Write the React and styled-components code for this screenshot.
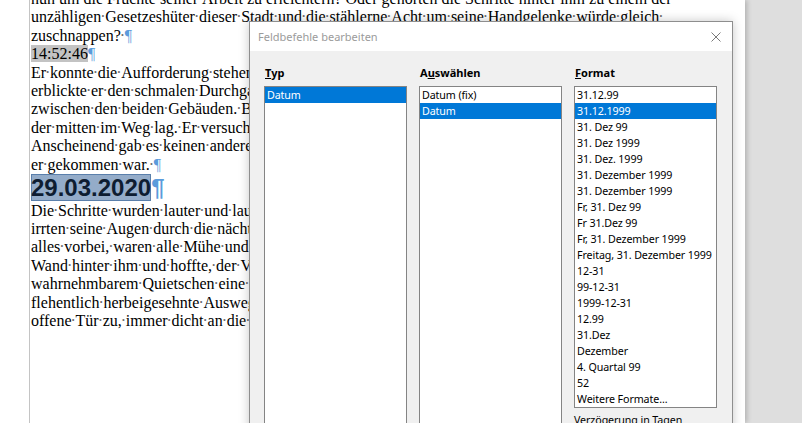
import React from "react";
import styled, { createGlobalStyle } from "styled-components";

const Global = createGlobalStyle`
  html, body { margin: 0; padding: 0; overflow: hidden; background: #dedede; }
  #root { width: 802px; height: 423px; }
`;

const Workspace = styled.div`
  position: relative;
  width: 802px;
  height: 423px;
  overflow: hidden;
  background: #dedede;
  display: flex;
`;

const Page = styled.div`
  flex-shrink: 0;
  width: 745px;
  height: 100%;
  box-sizing: border-box;
  padding-left: 29px;
  background: #ffffff;
  box-shadow: 2px 0 5px rgba(0, 0, 0, 0.2);
`;

const TextArea = styled.div`
  width: 644px;
  height: calc(100% + 10px);
  margin-top: -10px;
  box-sizing: border-box;
  border-left: 1px solid #c4c4c4;
  padding-left: 1px;
  overflow: hidden;
  font-family: "Liberation Serif", "Times New Roman", serif;
  font-size: 16px;
  line-height: 18.4px;
  color: #000;
`;

const Line = styled.div`
  white-space: pre;
`;

const Dot = styled.span`
  display: inline-block;
  width: 4px;
  text-align: center;
  color: #6a6a6a;
  overflow: visible;
  white-space: nowrap;
  text-indent: -1px;
`;

const Pilcrow = styled.span`
  color: #5b9bdb;
`;

const Field = styled.span`
  background: #c3c3c3;
`;

const BigLine = styled.div`
  white-space: nowrap;
  font-family: "Liberation Sans", Arial, sans-serif;
  font-weight: bold;
  font-size: 24px;
  line-height: 27.6px;
`;

const Selection = styled.span`
  background: #94acc9;
  color: #0e1d31;
  box-shadow: inset 0 0 0 1px #5a7fab;
`;

const Dialog = styled.div`
  position: absolute;
  left: 249px;
  top: 21px;
  width: 484px;
  height: 420px;
  box-sizing: border-box;
  border: 1px solid #8e8e8e;
  background: #f0f0f0;
  box-shadow: 0 0 10px rgba(0, 0, 0, 0.22);
  display: flex;
  flex-direction: column;
  font-family: "Noto Sans", "Open Sans", sans-serif;
  font-size: 10.7px;
  letter-spacing: -0.1px;
  color: #000;
`;

const TitleBar = styled.div`
  height: 29px;
  flex-shrink: 0;
  background: #ffffff;
  display: flex;
  align-items: center;
  justify-content: space-between;
  padding: 0 11px 0 8px;
`;

const Title = styled.span`
  color: #9b9b9b;
  font-size: 11px;
  letter-spacing: 0;
`;

const CloseIcon = styled.svg`
  width: 10px;
  height: 10px;
  display: block;
`;

const Body = styled.div`
  display: grid;
  grid-template-columns: repeat(3, 143px);
  column-gap: 12px;
  align-items: start;
  padding: 14px 15px 0 14px;
`;

const Column = styled.div`
  display: flex;
  flex-direction: column;
`;

const Label = styled.div`
  font-weight: bold;
  font-size: 11px;
  letter-spacing: 0;
  line-height: 16px;
  height: 16px;
  margin-bottom: 5px;
  padding-left: 1px;
  white-space: nowrap;
`;

const ListBox = styled.div`
  box-sizing: border-box;
  height: ${(p) => p.$height}px;
  border: 1px solid #848484;
  background: #ffffff;
  overflow: hidden;
`;

const Item = styled.div`
  height: 16px;
  line-height: 16px;
  padding-left: 2px;
  white-space: nowrap;
  background: ${(p) => (p.$selected ? "#0078d7" : "transparent")};
  color: ${(p) => (p.$selected ? "#ffffff" : "#000000")};
`;

const SubLabel = styled.div`
  margin-top: 4px;
  line-height: 16px;
  white-space: nowrap;
`;

function Text({ children }) {
  const words = children.split(" ");
  return (
    <>
      {words.map((w, i) => (
        <React.Fragment key={i}>
          {w}
          {i < words.length - 1 && <Dot>·</Dot>}
        </React.Fragment>
      ))}
    </>
  );
}

const lines = [
  "nun um die Früchte seiner Arbeit zu erleichtern? Oder gehörten die Schritte hinter ihm zu einem der",
  "unzähligen Gesetzeshüter dieser Stadt und die stählerne Acht um seine Handgelenke würde gleich ",
];

const middle = [
  "Er konnte die Aufforderung stehen zu bleiben nicht befolgen. Verzweifelt sah er sich um und",
  "erblickte er den schmalen Durchgang, eine dunkle Gasse, die sich wie ein Spalt auftat",
  "zwischen den beiden Gebäuden. Beinahe wäre er über den Mülleimer gestolpert,",
  "der mitten im Weg lag. Er versuchte sich im Dunkeln zu orientieren.",
  "Anscheinend gab es keinen anderen Ausweg als den Weg zurück, den",
];

const after = [
  "Die Schritte wurden lauter und lauter, er sah eine Gestalt um die Ecke biegen. Fieberhaft",
  "irrten seine Augen durch die nächtliche Dunkelheit und suchten einen Ausweg. War jetzt",
  "alles vorbei, waren alle Mühe und alle Vorbereitungen umsonst? Er presste sich gegen die",
  "Wand hinter ihm und hoffte, der Verfolger würde ihn übersehen. Plötzlich gab die Wand mit",
  "wahrnehmbarem Quietschen eine Tür frei. Er zögerte keinen Moment und stürzte durch den",
  "flehentlich herbeigesehnte Ausweg hinein. Leise zog er die",
  "offene Tür zu, immer dicht an die Wand gepresst, damit er nicht gesehen wurde.",
];

const formats = [
  "31.12.99",
  "31.12.1999",
  "31. Dez 99",
  "31. Dez 1999",
  "31. Dez. 1999",
  "31. Dezember 1999",
  "31. Dezember 1999",
  "Fr, 31. Dez 99",
  "Fr 31.Dez 99",
  "Fr, 31. Dezember 1999",
  "Freitag, 31. Dezember 1999",
  "12-31",
  "99-12-31",
  "1999-12-31",
  "12.99",
  "31.Dez",
  "Dezember",
  "4. Quartal 99",
  "52",
  "Weitere Formate...",
];

export default function App() {
  return (
    <>
      <Global />
      <Workspace>
        <Page>
          <TextArea>
            {lines.map((l, i) => (
              <Line key={i}>
                <Text>{l}</Text>
              </Line>
            ))}
            <Line>
              <Text>zuschnappen? </Text>
              <Pilcrow>¶</Pilcrow>
            </Line>
            <Line>
              <Field>14:52:46</Field>
              <Pilcrow>¶</Pilcrow>
            </Line>
            {middle.map((l, i) => (
              <Line key={i}>
                <Text>{l}</Text>
              </Line>
            ))}
            <Line>
              <Text>er gekommen war. </Text>
              <Pilcrow>¶</Pilcrow>
            </Line>
            <BigLine>
              <Selection>29.03.2020</Selection>
              <Pilcrow>¶</Pilcrow>
            </BigLine>
            {after.map((l, i) => (
              <Line key={i}>
                <Text>{l}</Text>
              </Line>
            ))}
          </TextArea>
        </Page>

        <Dialog>
          <TitleBar>
            <Title>Feldbefehle bearbeiten</Title>
            <CloseIcon viewBox="0 0 10 10">
              <path d="M0.5 0.5 L9.5 9.5 M9.5 0.5 L0.5 9.5" stroke="#7a7a7a" strokeWidth="1" fill="none" />
            </CloseIcon>
          </TitleBar>
          <Body>
            <Column>
              <Label>
                <u>T</u>yp
              </Label>
              <ListBox $height={360}>
                <Item $selected>Datum</Item>
              </ListBox>
            </Column>
            <Column>
              <Label>
                A<u>u</u>swählen
              </Label>
              <ListBox $height={360}>
                <Item>Datum (fix)</Item>
                <Item $selected>Datum</Item>
              </ListBox>
            </Column>
            <Column>
              <Label>
                <u>F</u>ormat
              </Label>
              <ListBox $height={322}>
                {formats.map((f, i) => (
                  <Item key={i} $selected={i === 1}>
                    {f}
                  </Item>
                ))}
              </ListBox>
              <SubLabel>Verzögerung in Tagen</SubLabel>
            </Column>
          </Body>
        </Dialog>
      </Workspace>
    </>
  );
}
